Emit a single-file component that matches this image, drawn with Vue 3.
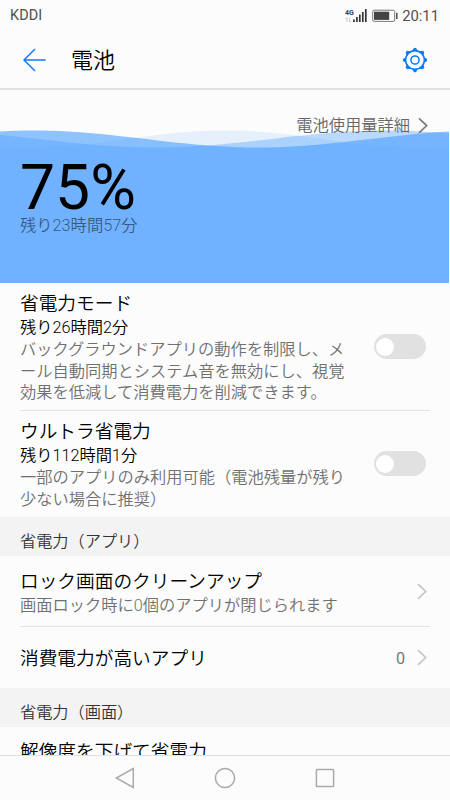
<script setup>
const crest = (peak, period) => {
  const points = []
  for (let i = 0; i <= 100; i++) {
    const x = i * 4.49
    const y = 9 - 8.5 * Math.cos((2 * Math.PI * (x - peak)) / period)
    points.push(`${x.toFixed(2)} ${y.toFixed(2)}`)
  }
  return `M${points.join('L')}V22H0Z`
}

const waves = [
  { d: crest(225, 395), opacity: 0.126 },
  { d: crest(387, 465), opacity: 0.37 },
  { d: crest(33, 450), opacity: 0.61 },
]

const modes = [
  {
    title: '省電力モード',
    remaining: '残り26時間2分',
    lines: ['バックグラウンドアプリの動作を制限し、メ', 'ール自動同期とシステム音を無効にし、視覚', '効果を低減して消費電力を削減できます。'],
  },
  {
    title: 'ウルトラ省電力',
    remaining: '残り112時間1分',
    lines: ['一部のアプリのみ利用可能（電池残量が残り', '少ない場合に推奨）'],
  },
]
const teeth = [0, 45, 90, 135, 180, 225, 270, 315]
</script>

<template>
  <div class="screen" lang="ja">
    <div class="status">
      <span class="carrier">KDDI</span>
      <svg class="signal" width="23" height="16" viewBox="0 0 23 16">
        <text x="0" y="6.5" class="net">4G</text>
        <path d="M2 14V9.5L.7 11M4.6 9.5V14L6 12.5" fill="none" stroke="#bbb" stroke-width=".8" />
        <path d="M8.9 14v-2.6M11.9 14V9M14.8 14V6.6M17.8 14V4M20.8 14V1" stroke="#333" stroke-width="1.7" />
      </svg>
      <svg class="battery" width="26" height="14" viewBox="0 0 26 14">
        <rect x=".7" y="1.2" width="22" height="11.2" rx="1.5" fill="none" stroke="#777" stroke-width="1" />
        <rect x="2" y="2.7" width="15.2" height="8.2" fill="#444" />
        <path d="M24.8 3.7v6.4" stroke="#444" stroke-width="1.4" />
      </svg>
      <span class="clock">20:11</span>
    </div>

    <header class="bar">
      <svg width="24" height="24" viewBox="0 0 24 24" fill="none" stroke="#1478f8" stroke-width="1.5">
        <path d="M22.7 12H1.2M12 1L1 12l11 11" />
      </svg>
      <h1>電池</h1>
      <svg class="gear" width="26" height="26" viewBox="-13 -13 26 26">
        <circle r="9.4" fill="none" stroke="#0d78fb" stroke-width="1.6" />
        <circle r="4.1" fill="none" stroke="#0d78fb" stroke-width="1.5" />
        <path v-for="a in teeth" :key="a" :transform="`rotate(${a})`" d="M-2.7-9.3L-1.3-11.7Q0-12.8 1.3-11.7L2.7-9.3Z" fill="#0d78fb" />
      </svg>
    </header>

    <main class="content">
      <section class="hero">
        <div class="water">
          <svg width="449" height="22" viewBox="0 0 449 22">
            <path v-for="(w, i) in waves" :key="i" :d="w.d" fill="#4a9eff" :fill-opacity="w.opacity" />
          </svg>
          <div class="fill"></div>
        </div>
        <div class="detail">
          <span>電池使用量詳細</span>
          <svg width="11" height="17" viewBox="0 0 11 17" fill="none" stroke="#777" stroke-width="1.6"><path d="M1 1.3L8.7 8.6 1 15.9" /></svg>
        </div>
        <div class="percent">75%</div>
        <div class="left">残り23時間57分</div>
      </section>

      <section v-for="(m, i) in modes" :key="i" class="mode" :class="{ divided: i === 0 }">
        <div>
          <div class="title">{{ m.title }}</div>
          <div class="remaining">{{ m.remaining }}</div>
          <div v-for="l in m.lines" :key="l" class="desc">{{ l }}</div>
        </div>
        <div class="switch"><div class="knob"></div></div>
      </section>

      <h2>省電力（アプリ）</h2>
      <section class="link divided tall">
        <div>
          <div class="title">ロック画面のクリーンアップ</div>
          <div class="desc">画面ロック時に0個のアプリが閉じられます</div>
        </div>
        <svg class="chev" width="11" height="17" viewBox="0 0 11 17"><path d="M1 1.2L8.7 8.5 1 15.8" /></svg>
      </section>
      <section class="link">
        <div class="title">消費電力が高いアプリ</div>
        <span class="count">0</span>
        <svg class="chev" width="11" height="17" viewBox="0 0 11 17"><path d="M1 1.2L8.7 8.5 1 15.8" /></svg>
      </section>
      <h2>省電力（画面）</h2>
      <section class="last"><div class="title">解像度を下げて省電力</div></section>
    </main>

    <nav class="nav">
      <svg width="22" height="22" viewBox="0 0 22 22"><path d="M19.3 1.5v19L2.3 11Z" /></svg>
      <svg width="22" height="22" viewBox="0 0 22 22"><circle cx="11" cy="11" r="9.6" /></svg>
      <svg width="22" height="22" viewBox="0 0 22 22"><rect x="2.4" y="2.4" width="17.2" height="17.2" rx=".8" /></svg>
    </nav>
  </div>
</template>

<style>
body { background: #fcfcfc; }
</style>

<style scoped>
.screen {
  display: flex;
  flex-direction: column;
  width: 450px;
  height: 800px;
  overflow: hidden;
  background: #fcfcfc;
  color: #000;
  font-family: Roboto, "Noto Sans CJK JP", sans-serif;
  font-weight: 350;
  white-space: nowrap;
}
svg { display: block; flex: none; }
.status {
  display: flex;
  align-items: center;
  height: 31px;
  padding: 0 11px 0 10px;
  box-sizing: border-box;
  color: #505050;
  font-weight: 400;
}
.carrier { flex: 1; font-size: 14.4px; letter-spacing: 0.1px; }
.signal { margin-right: 4px; }
.net { font: 700 7px Roboto, sans-serif; fill: #444; }
.battery { margin-right: 4px; }
.clock { font-size: 14.8px; line-height: 30px; }
.bar {
  display: flex;
  align-items: center;
  height: 59px;
  padding: 0 22px 0 23px;
  box-sizing: border-box;
  border-bottom: 2.5px solid #e2e2e2;
}
h1 { flex: 1; margin: 0 0 0 24px; padding-top: 2px; font-size: 22px; line-height: 30px; font-weight: 350; }
.content { height: 665px; overflow: hidden; }
.hero { position: relative; height: 193px; }
.water { position: absolute; top: 39.5px; left: 0; width: 449px; height: 153px; }
.fill { height: 131px; background: #70b2ff; }
.detail {
  position: relative;
  display: flex;
  align-items: center;
  justify-content: flex-end;
  gap: 8px;
  height: 25px;
  padding: 23px 21px 0 0;
  color: #666;
  font-size: 16.25px;
  line-height: 25px;
}
.percent {
  position: relative;
  margin-top: 22px;
  padding-left: 20px;
  font: 400 62.4px/56px Roboto, sans-serif;
}
.left {
  position: relative;
  margin-top: -1px;
  padding-left: 20px;
  color: rgba(0, 0, 0, 0.52);
  font-size: 16.3px;
  line-height: 22px;
}
.mode, .link {
  display: flex;
  justify-content: space-between;
  align-items: center;
  margin: 0 20px;
  box-sizing: border-box;
}
.mode { height: 106px; padding: 9px 4px 0 0; align-items: flex-start; }
.mode.divided { height: 128px; }
.divided { border-bottom: 1px solid #e3e3e3; }
.title { font-size: 18.7px; line-height: 25px; }
.remaining { margin-top: -1px; padding-bottom: 1px; font-size: 16.25px; line-height: 23px; }
.desc { color: #707070; font-size: 16.25px; line-height: 21.3px; }
.mode .desc { position: relative; top: -0.6px; }
.switch {
  width: 52px;
  height: 25px;
  margin-top: 31px;
  padding: 3.5px 2px;
  box-sizing: border-box;
  border-radius: 13px;
  background: #e1e1e1;
}
.mode.divided .switch { margin-top: 42px; }
.knob { width: 18px; height: 18px; border-radius: 50%; background: #fff; }
h2 {
  margin: 0;
  height: 39px;
  padding: 10px 20px 0;
  box-sizing: border-box;
  background: #f3f3f3;
  color: #333;
  font-size: 16.2px;
  line-height: 29px;
  font-weight: 350;
}
.link { height: 61px; padding-right: 2px; }
.link.tall { height: 71px; }
.link.tall .title { padding-top: 4px; }
.link.tall .desc { margin-top: 0; }
.link .title { flex: 1; padding-top: 3px; }
.count { margin-right: 12px; padding-top: 1px; color: #777; font-size: 16.2px; font-weight: 400; }
.chev { fill: none; stroke: #c4c4c4; stroke-width: 1.6; }
.last { padding: 13px 20px; }
.nav {
  display: flex;
  justify-content: center;
  align-items: center;
  gap: 78px;
  height: 45px;
  box-sizing: border-box;
  border-top: 1px solid #e0e0e0;
  fill: none;
  stroke: #aaa;
  stroke-width: 1.5;
}
</style>
